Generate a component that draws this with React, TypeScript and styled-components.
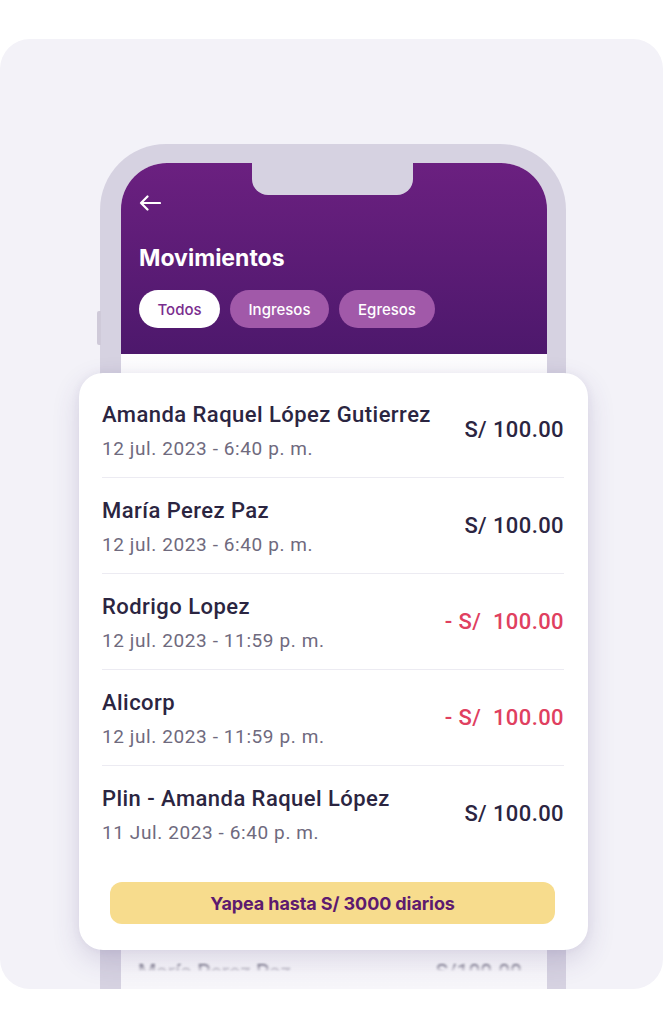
import { FC } from 'react';
import styled, { createGlobalStyle } from 'styled-components';

const GlobalStyle = createGlobalStyle`
    html, body {
        margin: 0;
        padding: 0;
        background: #ffffff;
    }
    * {
        box-sizing: border-box;
    }
`

const Page = styled.div`
    padding-top: 39px;
    height: 1029px;
    overflow: hidden;
`

const Panel = styled.div`
    height: 950px;
    background: #f3f2f8;
    border-radius: 30px;
    overflow: hidden;
    display: flex;
    flex-direction: column;
    align-items: center;
    padding: 105px 0 0 3px;
`

const Phone = styled.div`
    position: relative;
    width: 466px;
    flex: 1;
    background: #d6d2e1;
    border-radius: 66px 66px 0 0;
    padding: 19px 19px 0 21px;
    display: flex;
    flex-direction: column;

    &::before {
        content: '';
        position: absolute;
        left: -3px;
        top: 167px;
        width: 4px;
        height: 34px;
        border-radius: 2px 0 0 2px;
        background: #cfcad9;
    }
`

const Screen = styled.div`
    flex: 1;
    display: flex;
    flex-direction: column;
    background: linear-gradient(180deg, #ffffff 0%, #f7f6fa 100%);
    border-radius: 46px 46px 0 0;
`

const Header = styled.div`
    position: relative;
    height: 191px;
    border-radius: 46px 46px 0 0;
    background: linear-gradient(180deg, #6b2080 0%, #4d186c 100%);
    padding: 30px 18px 0 18px;
    display: flex;
    flex-direction: column;

    &::before {
        content: '';
        position: absolute;
        top: 0;
        left: 131px;
        width: 161px;
        height: 32px;
        background: #d6d2e1;
        border-radius: 0 0 16px 16px;
    }
`

const BackButton = styled.div`
    width: 24px;
    height: 20px;
    display: flex;
    align-items: center;
    color: #ffffff;
`

const Title = styled.div`
    margin-top: 31px;
    color: #ffffff;
    font-family: Inter, "Liberation Sans", sans-serif;
    font-size: 23px;
    font-weight: 700;
    line-height: 28px;
`

const Chips = styled.div`
    margin-top: 18px;
    display: flex;
    gap: 10px;
`

const Chip = styled.div<{ $active?: boolean; $w: number }>`
    width: ${p => p.$w}px;
    height: 38px;
    border-radius: 19px;
    display: flex;
    align-items: center;
    justify-content: center;
    font-family: Inter, "Liberation Sans", sans-serif;
    font-size: 15px;
    font-weight: 500;
    background: ${p => (p.$active ? '#ffffff' : '#a159a9')};
    color: ${p => (p.$active ? '#7a2d8e' : '#ffffff')};
`

const Card = styled.div`
    margin: 19px -41px 0 -42px;
    background: #ffffff;
    border-radius: 24px;
    box-shadow: 0 10px 28px rgba(70, 50, 120, 0.16), 0 0 10px rgba(70, 50, 120, 0.06);
    padding: 9px 24px 26px 23px;
    display: flex;
    flex-direction: column;
`

const Row = styled.div<{ $last?: boolean }>`
    height: ${p => (p.$last ? 95 : 96)}px;
    display: flex;
    align-items: center;
    justify-content: space-between;
    border-bottom: ${p => (p.$last ? 'none' : '1px solid #ecebf2')};
`

const RowText = styled.div`
    display: flex;
    flex-direction: column;
    gap: 10px;
    margin-top: 3px;
`

const Name = styled.div`
    font-family: Roboto, "Liberation Sans", sans-serif;
    font-size: 22px;
    font-weight: 500;
    line-height: 26px;
    letter-spacing: 0.45px;
    color: #2b2541;
`

const DateText = styled.div`
    font-family: Roboto, "Liberation Sans", sans-serif;
    font-size: 19px;
    line-height: 22px;
    letter-spacing: 0.6px;
    color: #6f6a7e;
`

const Amount = styled.div<{ $out?: boolean }>`
    font-family: Roboto, "Liberation Sans", sans-serif;
    font-size: 22px;
    font-weight: 500;
    letter-spacing: 0.4px;
    white-space: pre;
    color: ${p => (p.$out ? '#e0405f' : '#2b2541')};
`

const LimitButton = styled.div`
    margin: 21px 9px 0 8px;
    height: 42px;
    border-radius: 12px;
    background: #f7dc8d;
    display: flex;
    align-items: center;
    justify-content: center;
    font-family: Inter, "Liberation Sans", sans-serif;
    font-size: 18px;
    font-weight: 700;
    letter-spacing: -0.1px;
    color: #5d1a6f;
`

const PeekRow = styled.div`
    margin-top: 10px;
    height: 12px;
    overflow: hidden;
    padding: 0 25px 0 17px;
    display: flex;
    justify-content: space-between;
    font-family: Roboto, "Liberation Sans", sans-serif;
    font-size: 21px;
    font-weight: 500;
    line-height: 24px;
    color: #55516a;
    filter: blur(1px);
    opacity: 0.8;
    -webkit-mask-image: linear-gradient(180deg, #000 30%, transparent 100%);
    mask-image: linear-gradient(180deg, #000 30%, transparent 100%);
`

const movements = [
    { name: 'Amanda Raquel López Gutierrez', date: '12 jul. 2023 - 6:40 p. m.', amount: 'S/ 100.00', out: false },
    { name: 'María Perez Paz', date: '12 jul. 2023 - 6:40 p. m.', amount: 'S/ 100.00', out: false },
    { name: 'Rodrigo Lopez', date: '12 jul. 2023 - 11:59 p. m.', amount: '- S/  100.00', out: true },
    { name: 'Alicorp', date: '12 jul. 2023 - 11:59 p. m.', amount: '- S/  100.00', out: true },
    { name: 'Plin - Amanda Raquel López', date: '11 Jul. 2023 - 6:40 p. m.', amount: 'S/ 100.00', out: false },
];

const BackArrow: FC = () => (
    <svg width="22" height="16" viewBox="0 0 22 16" fill="none">
        <path d="M21 8H2M8.5 1.5L2 8l6.5 6.5" stroke="#ffffff" strokeWidth="2.2" strokeLinecap="round" strokeLinejoin="round" />
    </svg>
);

export default function App() {
    return (
        <>
            <GlobalStyle />
            <Page>
                <Panel>
                    <Phone>
                        <Screen>
                            <Header>
                                <BackButton>
                                    <BackArrow />
                                </BackButton>
                                <Title>Movimientos</Title>
                                <Chips>
                                    <Chip $active $w={81}>Todos</Chip>
                                    <Chip $w={99}>Ingresos</Chip>
                                    <Chip $w={96}>Egresos</Chip>
                                </Chips>
                            </Header>
                            <Card>
                                {movements.map((m, i) => (
                                    <Row key={i} $last={i === movements.length - 1}>
                                        <RowText>
                                            <Name>{m.name}</Name>
                                            <DateText>{m.date}</DateText>
                                        </RowText>
                                        <Amount $out={m.out}>{m.amount}</Amount>
                                    </Row>
                                ))}
                                <LimitButton>Yapea hasta S/ 3000 diarios</LimitButton>
                            </Card>
                            <PeekRow>
                                <span>María Perez Paz</span>
                                <span>S/100.00</span>
                            </PeekRow>
                        </Screen>
                    </Phone>
                </Panel>
            </Page>
        </>
    );
}
